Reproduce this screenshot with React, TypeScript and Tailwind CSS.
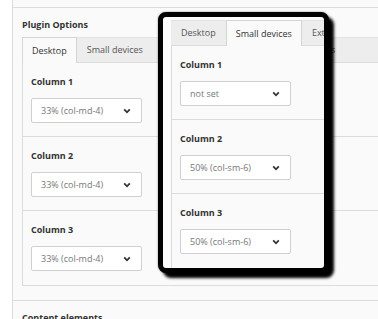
const bgTabs = ["Desktop", "Small devices", "Extra small devices", "Medium devices"];

function Chevron() {
  return (
    <svg width="8" height="6" viewBox="0 0 8 6" className="shrink-0">
      <path d="M1.2 1.4 L4 4.3 L6.8 1.4" fill="none" stroke="#333" strokeWidth="1.8" />
    </svg>
  );
}

function Select({ value }: { value: string }) {
  return (
    <div className="flex items-center justify-between w-[111px] h-[25px] bg-white border border-[#d0d0d0] rounded-[2px] pl-[9px] pr-[10px] text-[9px] text-[#777]">
      <span>{value}</span>
      <Chevron />
    </div>
  );
}

function Section({ label, value, last }: { label: string; value: string; last?: boolean }) {
  return (
    <div className={`pl-2 pt-[13px] ${last ? "pb-[14px]" : "pb-[13px] border-b border-[#dcdcdc]"}`}>
      <div className="text-[9px] leading-[12px] font-bold text-[#333]">{label}</div>
      <div className="mt-[10px]">
        <Select value={value} />
      </div>
    </div>
  );
}

function Options({ tabs, active, values }: { tabs: string[]; active: number; values: string[] }) {
  return (
    <div>
      <div className="flex items-start h-[25px]">
        {tabs.map((t, i) =>
          i === active ? (
            <div
              key={t}
              className="relative z-10 h-[26px] -mb-px flex items-center px-[9px] bg-[#fafafa] border border-b-0 border-[#d5d5d5] text-[9px] text-[#333] whitespace-nowrap"
            >
              {t}
            </div>
          ) : (
            <div
              key={t}
              className={`h-[25px] flex items-center bg-[#ededed] border-t border-[#e2e2e2] text-[9px] text-[#555] whitespace-nowrap ${
                i > 2 ? "px-[15px]" : "px-[10px]"
              }`}
            >
              {t}
            </div>
          )
        )}
        <div className="flex-1 h-[25px] bg-[#ededed] border-t border-[#e2e2e2]" />
      </div>
      <div className="w-[420px] border border-[#dcdcdc]">
        <Section label="Column 1" value={values[0]} />
        <Section label="Column 2" value={values[1]} />
        <Section label="Column 3" value={values[2]} last />
      </div>
    </div>
  );
}

export default function App() {
  return (
    <div
      className="relative w-[378px] h-[319px] overflow-hidden bg-white flex"
      style={{ fontFamily: '"Open Sans", "Liberation Sans", sans-serif' }}
    >
      <div className="w-[12px] shrink-0 bg-white" />
      <div className="flex-1 min-w-0 border-l border-[#dcdcdc] bg-[#fafafa] overflow-hidden">
        <div className="h-[8px] border-b border-[#dcdcdc]" />
        <div className="pl-[9px] pt-[11px]">
          <div className="text-[9px] leading-[12px] font-bold text-[#333] mb-[6px]">Plugin Options</div>
          <Options
            tabs={bgTabs}
            active={0}
            values={["33% (col-md-4)", "33% (col-md-4)", "33% (col-md-4)"]}
          />
        </div>
        <div className="mt-[14px] border-t border-[#dcdcdc] pl-[9px] pt-[11px]">
          <div className="text-[9px] leading-[12px] font-bold text-[#333]">Content elements</div>
        </div>
      </div>

      {/* zoomed callout */}
      <div className="absolute left-[158px] top-[12px] w-[171px] h-[261px] border-[5px] border-black rounded-[8px] overflow-hidden bg-[#fafafa] shadow-[5px_5px_3px_#000,0_0_2px_rgba(0,0,0,0.5)]">
        <div className="pl-[8px] pt-[3px]">
          <Options
            tabs={["Desktop", "Small devices", "Extra small devices"]}
            active={1}
            values={["not set", "50% (col-sm-6)", "50% (col-sm-6)"]}
          />
        </div>
      </div>
    </div>
  );
}
